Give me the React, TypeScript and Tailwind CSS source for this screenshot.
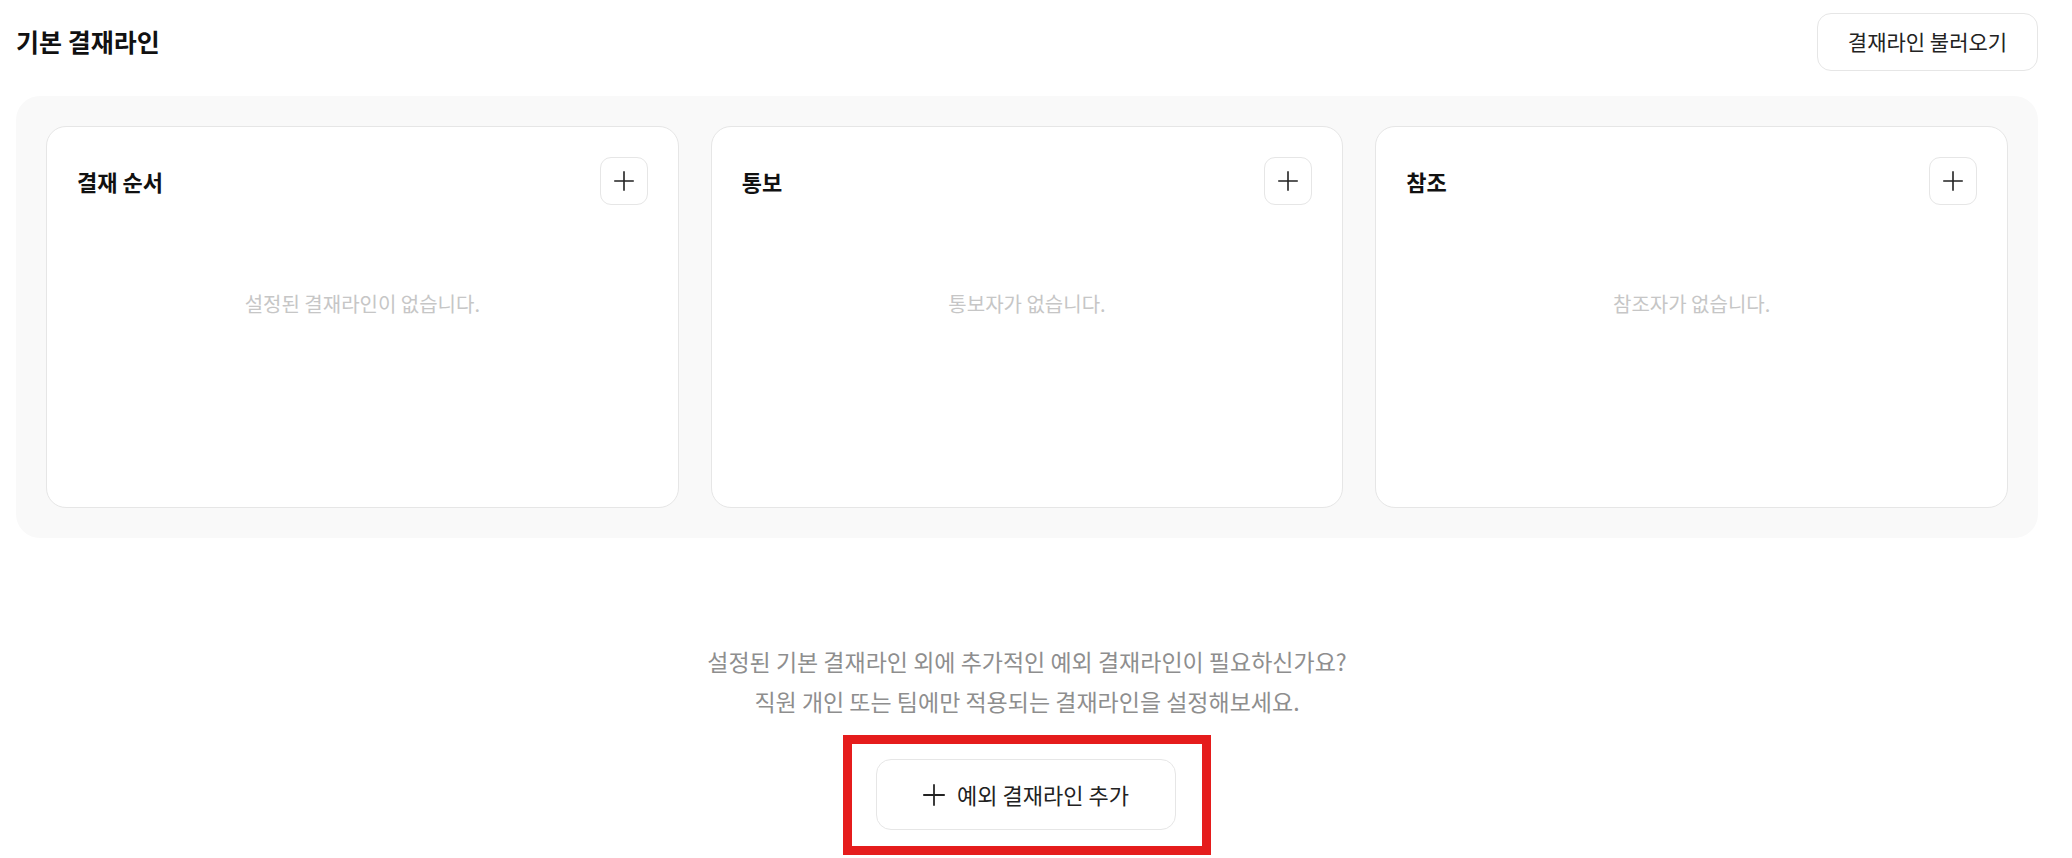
import React from 'react'

const FONT = "font-['Noto_Sans_CJK_KR','Noto_Sans',sans-serif]"

function PlusIcon({ size = 20 }: { size?: number }) {
  return (
    <svg width={size} height={size} viewBox="0 0 20 20" fill="none" stroke="#222" strokeWidth="1.6" strokeLinecap="square">
      <path d="M10 1v18M1 10h18" />
    </svg>
  )
}

interface LineCardProps {
  title: string
  empty: string
}

function LineCard({ title, empty }: LineCardProps) {
  return (
    <div className="flex h-[382px] flex-col rounded-[20px] border border-[#e6e6e6] bg-white px-[30px] pt-[30px]">
      <div className="flex items-center justify-between">
        <h3 className="text-[22px] font-bold text-[#111]">{title}</h3>
        <button className="flex h-[48px] w-[48px] items-center justify-center rounded-[11px] border border-[#e6e6e6] bg-white">
          <PlusIcon />
        </button>
      </div>
      <p className="mt-[85px] text-center text-[20px] leading-[28px] text-[#c6c6c6]">{empty}</p>
    </div>
  )
}

export default function App() {
  return (
    <div className={`${FONT} min-h-[858px] bg-white pl-4 pr-[34px] pt-[13px]`}>
      {/* 기본 결재라인 */}
      <div className="flex items-center justify-between">
        <h2 className="text-[25px] font-bold text-[#111]">기본 결재라인</h2>
        <button className="flex h-[58px] w-[221px] items-center justify-center rounded-[14px] border border-[#e6e6e6] bg-white text-[21px] text-[#222]">
          결재라인 불러오기
        </button>
      </div>

      <div className="mt-[25px] grid grid-cols-3 gap-[32px] rounded-[24px] bg-[#f9f9f9] p-[30px]">
        <LineCard title="결재 순서" empty="설정된 결재라인이 없습니다." />
        <LineCard title="통보" empty="통보자가 없습니다." />
        <LineCard title="참조" empty="참조자가 없습니다." />
      </div>

      {/* 예외 결재라인 */}
      <div className="mt-[103px] flex flex-col items-center">
        <p className="text-center text-[23px] leading-[40px] text-[#8e8e8e]">
          설정된 기본 결재라인 외에 추가적인 예외 결재라인이 필요하신가요?
          <br />
          직원 개인 또는 팀에만 적용되는 결재라인을 설정해보세요.
        </p>
        <div className="mt-[14px] border-[9px] border-[#e51c1c] pb-[16px] pl-[24px] pr-[26px] pt-[15px]">
          <button className="flex h-[71px] w-[300px] items-center justify-center gap-[12px] rounded-[15px] border border-[#e6e6e6] bg-white text-[22px] text-[#222]">
            <PlusIcon size={22} />
            예외 결재라인 추가
          </button>
        </div>
      </div>
    </div>
  )
}
